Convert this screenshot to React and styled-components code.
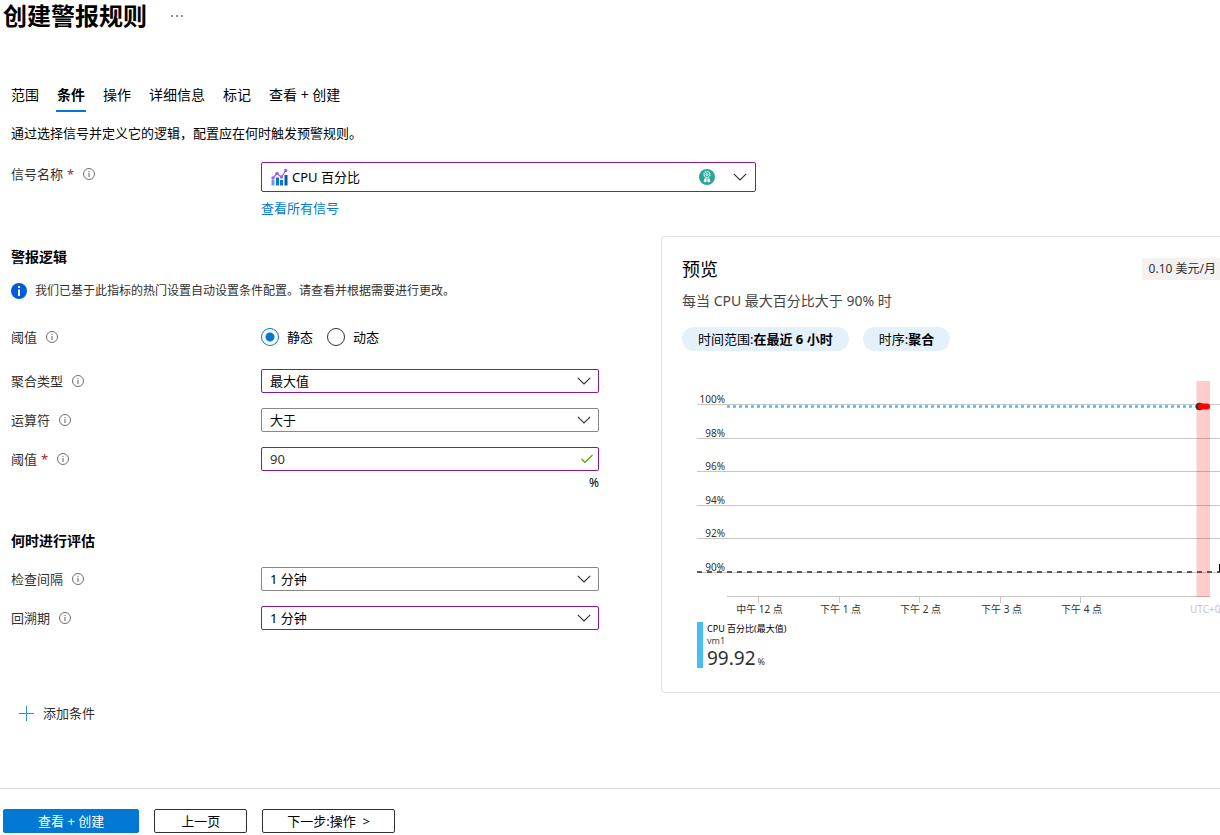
import React, { useState } from 'react';
import styled, { createGlobalStyle } from 'styled-components';

const GlobalStyle=createGlobalStyle`
  * {
    box-sizing:border-box;
  }

  body {
    margin:0;
    background:#fff;
    color:#000;
    overflow-x:hidden;
  }

  body, button, input, select {
    font-family:"Noto Sans","Noto Sans CJK SC",sans-serif;
    font-size:13px;
    line-height:20px;
  }

  h1, h2, p {
    margin:0;
  }

  svg {
    flex:none;
    display:block;
  }
`

const Header=styled.header`
  display:flex;
  align-items:center;
  gap:18px;
  padding-left:3px;
`

const Title=styled.h1`
  font-size:24px;
  line-height:32px;
  font-weight:700;
`

const IconButton=styled.button`
  display:flex;
  padding:4px;
  border:none;
  background:none;
  cursor:pointer;
`

const Tabs=styled.nav`
  display:flex;
  gap:16px;
  margin-top:46px;
  padding-left:10px;
`

const Tab=styled.a`
  padding:2px 1px 0;
  font-size:14px;
  line-height:30px;
  color:#000;
  text-decoration:none;
  font-weight:${props=>props.$active?700:400};
  border-bottom:2px solid ${props=>props.$active?"#0078d4":"transparent"};
`

const Form=styled.form`
  padding-left:11px;
`

const Description=styled.p`
  margin-top:11px;
`

const SignalSection=styled.section`
  display:grid;
  grid-template-columns:250px minmax(0,495px);
  margin-top:19px;
`

const Label=styled.label`
  display:flex;
  align-items:center;
  gap:8px;
  min-height:24px;
  color:#323130;

  svg {
    margin-left:1px;
  }
`

const LabelText=styled.span`
  span {
    margin-left:4px;
    color:#a4262c;
  }
`

const SignalBox=styled.div`
  display:flex;
  align-items:center;
  height:30px;
  padding:0 8px 0 9px;
  border:1px solid ${props=>props.$edited?"#881798":"#8a8886"};
  border-radius:2px;
`

const SignalSelect=styled.select`
  flex:1;
  min-width:0;
  padding:0 4px;
  border:none;
  outline:none;
  appearance:none;
  background:none;
  color:#000;
`

const SignalIcons=styled.div`
  display:flex;
  align-items:center;
  gap:18px;
`

const Link=styled.a`
  display:inline-block;
  margin-top:6px;
  color:#0078d4;
  text-decoration:none;
`

const Columns=styled.div`
  display:grid;
  grid-template-columns:588px minmax(0,1fr);
  column-gap:62px;
  margin-top:18px;
`

const SectionTitle=styled.h2`
  font-size:14px;
  line-height:20px;
  font-weight:700;
`

const Logic=styled.section`
  padding-top:11px;
`

const Notice=styled.p`
  display:flex;
  align-items:center;
  gap:8px;
  margin:14px 0 24px;
  font-size:12px;
  color:#323130;
`

const Rows=styled.div`
  display:flex;
  flex-direction:column;
  gap:15px;
  margin-top:${props=>props.$top}px;
`

const Row=styled.div`
  display:grid;
  grid-template-columns:250px minmax(0,1fr);
  min-height:24px;
`

const Radios=styled.div`
  display:flex;
  align-items:center;
  gap:14px;
`

const RadioLabel=styled.label`
  display:flex;
  align-items:center;
  gap:8px;
`

const Radio=styled.input`
  appearance:none;
  width:18px;
  height:18px;
  margin:0;
  border:1px solid #323130;
  border-radius:50%;

  &:checked {
    border-color:#0078d4;
    background:radial-gradient(circle,#0078d4 4px,transparent 5px);
  }
`

const Field=styled.div`
  position:relative;
  height:24px;

  svg {
    position:absolute;
    top:50%;
    right:${props=>props.$inset}px;
    transform:translateY(-50%);
    pointer-events:none;
  }
`

const Select=styled.select`
  width:100%;
  height:24px;
  padding:0 28px 0 8px;
  appearance:none;
  background:#fff;
  color:#000;
  border:1px solid ${props=>props.$edited?"#881798":"#8a8886"};
  border-radius:2px;
`

const TextInput=styled.input`
  width:100%;
  height:24px;
  padding:0 28px 0 8px;
  border:1px solid #881798;
  border-radius:2px;
  color:#323130;
`

const Unit=styled.div`
  margin-top:2px;
  font-size:12px;
  text-align:right;
`

const Evaluation=styled.section`
  margin-top:38px;
`

const AddButton=styled.button`
  display:flex;
  align-items:center;
  gap:8px;
  margin-top:73px;
  padding:0 7px;
  border:none;
  background:none;
  color:#323130;
  cursor:pointer;
`

const Preview=styled.section`
  align-self:start;
  padding:20px 0 24px 20px;
  border:1px solid #e1dfdd;
  border-right:none;
  border-radius:4px 0 0 4px;
`

const PreviewHeader=styled.div`
  display:flex;
  align-items:center;
  justify-content:space-between;
`

const PreviewTitle=styled.h2`
  font-size:18px;
  line-height:24px;
  font-weight:400;
`

const Price=styled.span`
  padding:0 4px 0 7px;
  background:#f3f2f1;
  color:#323130;
  font-size:12px;
  line-height:22px;
`

const Summary=styled.p`
  margin-top:10px;
  font-size:14px;
  color:#484644;
`

const Pills=styled.div`
  display:flex;
  gap:14px;
  margin-top:16px;
`

const Pill=styled.span`
  padding:0 16px;
  border-radius:12px;
  background:#e4f1fb;
  line-height:24px;
  white-space:nowrap;
`

const Figure=styled.figure`
  margin:30px 0 0 15px;
`

const Chart=styled.svg`
  width:100%;
  height:237px;
  font-size:10px;
  fill:#323130;
`

const Legend=styled.figcaption`
  display:flex;
  flex-direction:column;
  margin-top:4px;
  padding-left:4px;
  border-left:6px solid #47bdf5;
  font-size:9px;
  line-height:12px;
`

const LegendName=styled.span`
  line-height:14px;
`

const LegendTarget=styled.span`
  line-height:10px;
  color:#484644;
`

const LegendValue=styled.span`
  display:flex;
  align-items:baseline;
  gap:2px;
  height:20px;
  margin-top:2px;
  color:#323130;

  strong {
    font-size:19px;
    line-height:20px;
    font-weight:400;
  }
`

const Footer=styled.footer`
  display:flex;
  gap:15px;
  margin-top:65px;
  padding:20px 3px 2px;
  border-top:1px solid #d9d9d9;
`

const Button=styled.button`
  height:24px;
  padding:0 ${props=>props.$pad}px;
  border:1px solid ${props=>props.$primary?"#0078d4":"#323130"};
  border-radius:2px;
  background:${props=>props.$primary?"#0078d4":"#fff"};
  color:${props=>props.$primary?"#fff":"#000"};
  cursor:pointer;
`

const InfoIcon=()=>(
  <svg width="12" height="12" viewBox="0 0 12 12" fill="none" stroke="#605e5c">
    <circle cx="6" cy="6" r="5.5" strokeWidth="0.9"/>
    <path d="M6 5v4M6 3v1"/>
  </svg>
)

const Chevron=()=>(
  <svg width="14" height="8" viewBox="0 0 14 8" fill="none" stroke="#323130" strokeWidth="1.1">
    <path d="M0.8 0.8L7 7L13.2 0.8"/>
  </svg>
)

const MetricIcon=()=>(
  <svg width="17" height="18" viewBox="0 0 17 18">
    <path fill="#5ea0ef" d="M0.5 12H3.5V17.5H0.5z"/>
    <path fill="#0078d4" d="M5 9.5H8V17.5H5z"/>
    <path fill="#0078d4" d="M9 12H12V17.5H9z"/>
    <path fill="#005ba1" d="M13.5 7H16.5V17.5H13.5z"/>
    <path fill="none" stroke="#a05cf0" strokeWidth="1.2" d="M2 10L6 5.5L10.5 9L14.7 2.5"/>
    <g fill="#a05cf0">
      <circle cx="2" cy="10" r="1.7"/>
      <circle cx="6" cy="5.5" r="1.7"/>
      <circle cx="10.5" cy="9" r="1.7"/>
      <circle cx="14.7" cy="2.5" r="1.7"/>
    </g>
  </svg>
)

const BadgeIcon=()=>(
  <svg width="16" height="16" viewBox="0 0 16 16">
    <circle cx="8" cy="8" r="8" fill="#2aa595"/>
    <circle cx="8" cy="5.5" r="3" fill="none" stroke="#e3f6f3" strokeWidth="1.4" strokeDasharray="1.7 0.6"/>
    <circle cx="8" cy="5.5" r="1.6" fill="#b5e3dc"/>
    <path fill="#fff" d="M5.8 9.2L7.6 9.6V12.6L6.2 13.4L4.6 12.4zM10.2 9.2L8.4 9.6V12.6L9.8 13.4L11.4 12.4z"/>
  </svg>
)

const NoticeIcon=()=>(
  <svg width="16" height="16" viewBox="0 0 16 16">
    <circle cx="8" cy="8" r="8" fill="#015cda"/>
    <path fill="#fff" d="M7 3H9V5H7zM7 6.5H9V13H7z"/>
  </svg>
)

const CheckIcon=()=>(
  <svg width="12" height="9" viewBox="0 0 12 9" fill="none" stroke="#57a300" strokeWidth="1.2">
    <path d="M0.5 4.5L4 8L11.5 0.5"/>
  </svg>
)

const PlusIcon=()=>(
  <svg width="17" height="17" viewBox="0 0 17 17" stroke="#2b8fe0">
    <path d="M8.5 1V16M1 8.5H16"/>
  </svg>
)

const FieldLabel=({htmlFor,text,required,as})=>(
  <Label as={as} htmlFor={htmlFor}>
    <LabelText>{text}{required && <span>*</span>}</LabelText>
    <InfoIcon/>
  </Label>
)

const SelectRow=({id,label,value,edited})=>(
  <Row>
    <FieldLabel htmlFor={id} text={label}/>
    <Field $inset={8}>
      <Select id={id} $edited={edited}>
        <option>{value}</option>
      </Select>
      <Chevron/>
    </Field>
  </Row>
)

const tabs=["范围","条件","操作","详细信息","标记","查看 + 创建"];
const levels=["100%","98%","96%","94%","92%","90%"];
const times=["中午 12 点","下午 1 点","下午 2 点","下午 3 点","下午 4 点"];

const CpuChart=()=>(
  <Chart role="img" aria-label="CPU 百分比">
    {
      levels.map((level,index)=>{
        const y=Math.round(23+index*33.6)+0.5;
        return (
          <g key={level}>
            <line x1="0" x2="100%" y1={y} y2={y} stroke="#c8c6c4"/>
            <text x="28" y={y-2} textAnchor="end">{level}</text>
          </g>
        )
      })
    }
    <line x1="0" x2="100%" y1="191" y2="191" stroke="#323130" strokeWidth="1.5" strokeDasharray="5 5"/>
    <line x1="30" x2="513" y1="215.5" y2="215.5" stroke="#c8c6c4"/>
    {
      times.map((time,index)=>{
        const x=Math.round(61+index*80.6)+0.5;
        return (
          <g key={time}>
            <line x1={x} x2={x} y1="216" y2="222" stroke="#c8c6c4"/>
            <text x={x+1} y="232" textAnchor="middle">{time}</text>
          </g>
        )
      })
    }
    <text x="493" y="232" fill="#c8c6c4">UTC+0</text>
    <line x1="30" x2="500" y1="25.5" y2="25.5" stroke="#47bdf5" strokeWidth="2.4" strokeDasharray="3 3"/>
    <rect x="499.5" y="0" width="13.5" height="216" fill="#f00" fillOpacity="0.2"/>
    <circle cx="502.5" cy="25.5" r="3.8" fill="#323130"/>
    <path d="M504 25.5H510" stroke="#f00" strokeWidth="6" strokeLinecap="round"/>
    <rect x="522" y="183" width="2" height="8" fill="#000"/>
  </Chart>
)

export default function App() {
  const [threshold,setThreshold]=useState("90");
  const [mode,setMode]=useState("static");

  return (
    <>
      <GlobalStyle/>
      <Header>
        <Title>创建警报规则</Title>
        <IconButton aria-label="更多">
          <svg width="16" height="4" viewBox="0 0 16 4" fill="#605e5c">
            <circle cx="3" cy="2" r="0.9"/>
            <circle cx="8" cy="2" r="0.9"/>
            <circle cx="13" cy="2" r="0.9"/>
          </svg>
        </IconButton>
      </Header>
      <Tabs>
        {
          tabs.map(tab=><Tab key={tab} href="#" $active={tab==="条件"}>{tab}</Tab>)
        }
      </Tabs>
      <Form onSubmit={e=>e.preventDefault()}>
        <Description>通过选择信号并定义它的逻辑，配置应在何时触发预警规则。</Description>
        <SignalSection>
          <div>
            <FieldLabel htmlFor="signal" text="信号名称" required/>
          </div>
          <div>
            <SignalBox $edited>
              <MetricIcon/>
              <SignalSelect id="signal">
                <option>CPU 百分比</option>
              </SignalSelect>
              <SignalIcons>
                <BadgeIcon/>
                <Chevron/>
              </SignalIcons>
            </SignalBox>
            <Link href="#">查看所有信号</Link>
          </div>
        </SignalSection>

        <Columns>
          <Logic>
            <SectionTitle>警报逻辑</SectionTitle>
            <Notice>
              <NoticeIcon/>
              我们已基于此指标的热门设置自动设置条件配置。请查看并根据需要进行更改。
            </Notice>
            <Row>
              <FieldLabel as="div" text="阈值"/>
              <Radios role="radiogroup" aria-label="阈值">
                <RadioLabel>
                  <Radio type="radio" name="mode" checked={mode==="static"} onChange={()=>setMode("static")}/>
                  静态
                </RadioLabel>
                <RadioLabel>
                  <Radio type="radio" name="mode" checked={mode==="dynamic"} onChange={()=>setMode("dynamic")}/>
                  动态
                </RadioLabel>
              </Radios>
            </Row>
            <Rows $top={20}>
              <SelectRow id="aggregation" label="聚合类型" value="最大值" edited/>
              <SelectRow id="operator" label="运算符" value="大于"/>
              <Row>
                <FieldLabel htmlFor="threshold" text="阈值" required/>
                <Field $inset={6}>
                  <TextInput id="threshold" value={threshold} onChange={e=>setThreshold(e.target.value)}/>
                  <CheckIcon/>
                </Field>
              </Row>
            </Rows>
            <Unit>%</Unit>

            <Evaluation>
              <SectionTitle>何时进行评估</SectionTitle>
              <Rows $top={16}>
                <SelectRow id="frequency" label="检查间隔" value="1 分钟"/>
                <SelectRow id="lookback" label="回溯期" value="1 分钟" edited/>
              </Rows>
            </Evaluation>
            <AddButton type="button"><PlusIcon/>添加条件</AddButton>
          </Logic>

          <Preview>
            <PreviewHeader>
              <PreviewTitle>预览</PreviewTitle>
              <Price>0.10 美元/月</Price>
            </PreviewHeader>
            <Summary>每当 CPU 最大百分比大于 90% 时</Summary>
            <Pills>
              <Pill>时间范围:<b>在最近 6 小时</b></Pill>
              <Pill>时序:<b>聚合</b></Pill>
            </Pills>
            <Figure>
              <CpuChart/>
              <Legend>
                <LegendName>CPU 百分比(最大值)</LegendName>
                <LegendTarget>vm1</LegendTarget>
                <LegendValue><strong>99.92</strong>%</LegendValue>
              </Legend>
            </Figure>
          </Preview>
        </Columns>
      </Form>
      <Footer>
        <Button $primary $pad={34}>查看 + 创建</Button>
        <Button $pad={26}>上一页</Button>
        <Button $pad={24}>下一步:操作&nbsp; &gt;</Button>
      </Footer>
    </>
  );
}
